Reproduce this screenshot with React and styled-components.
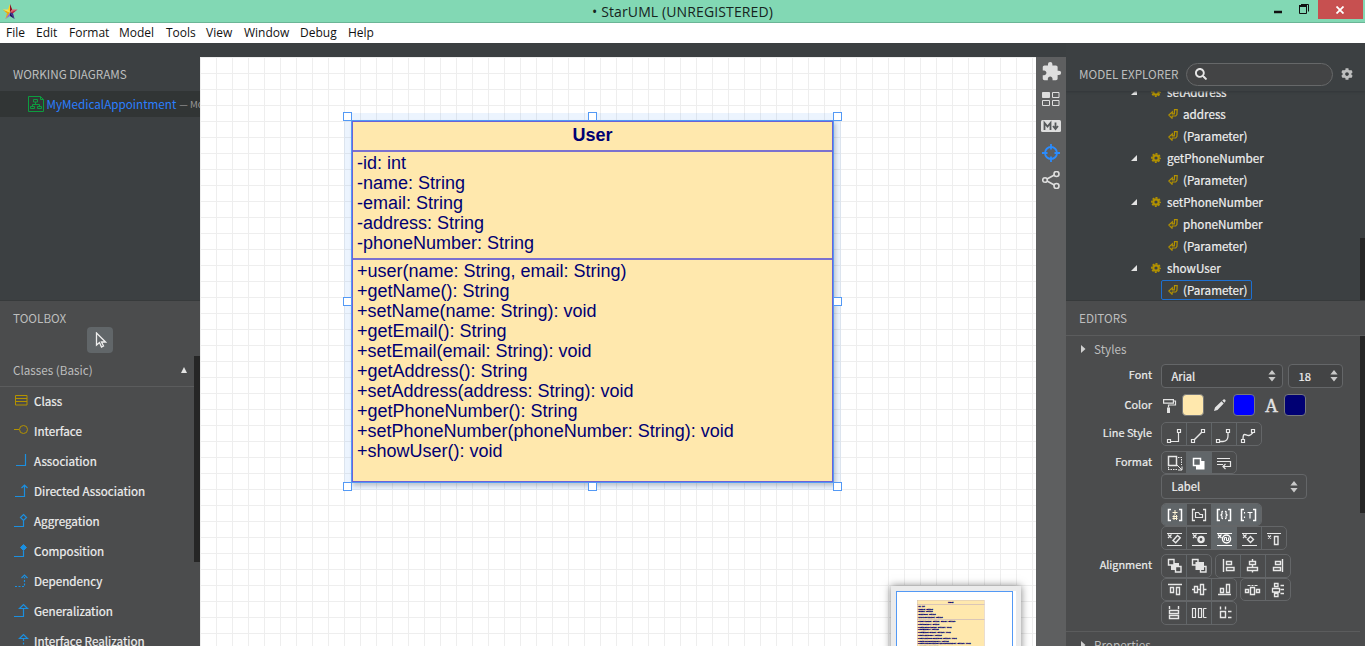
import React from "react";
import styled, { createGlobalStyle } from "styled-components";
import { FaCog, FaSearch } from "react-icons/fa";
import { MdExtension } from "react-icons/md";

const ui = `"Noto Sans CJK SC", "Noto Sans", sans-serif`;

const Global = createGlobalStyle`
  * { box-sizing: border-box; }
  html, body { margin: 0; height: 100%; overflow: hidden; }
  body { background: #3c4042; font-family: ${ui}; }
  svg { display: block; flex: none; }
`;

/* ---------- window frame ---------- */
const Window = styled.div`
  width: 1365px; height: 646px; overflow: hidden;
  display: flex; flex-direction: column; background: #3b3f41;
`;
const TitleBar = styled.header`
  height: 23px; flex: none; background: #82d8b4; border-bottom: 1px solid #6bb596;
  display: flex; justify-content: space-between; align-items: flex-start;
  padding: 0 2px 0 2px;
`;
const TitleSide = styled.div`
  width: 110px; display: flex; justify-content: ${p => (p.$end ? "flex-end" : "flex-start")};
`;
const Title = styled.div`
  font: 14px/22px "Open Sans", sans-serif; color: #16241e; white-space: nowrap;
  letter-spacing: 0.12px; padding-top: 1px;
`;
const CloseButton = styled.div`
  width: 45px; height: 19px; background: #c75050;
  display: flex; align-items: center; justify-content: center;
`;
const MenuBar = styled.nav`
  height: 20px; flex: none; background: #fff; display: flex; padding-left: 6px;
  font: 12px/20px "Open Sans", sans-serif; color: #111;
`;
const MenuItem = styled.span`
  width: ${p => p.$w}px; flex: none; white-space: nowrap;
`;
const Body = styled.main`
  flex: 1; min-height: 0; margin-top: 14px; display: flex;
`;

/* ---------- side panels ---------- */
const Side = styled.aside`
  width: ${p => p.$w}px; flex: none; display: flex; flex-direction: column; overflow: hidden;
  margin-top: -14px; padding-top: 14px; background: #3c4042;
`;
const TopPane = styled.section`
  height: 244px; flex: none; border-bottom: 1px solid #373a3b; overflow: hidden;
  display: flex; flex-direction: column;
`;
const BottomPane = styled.section`
  flex: 1; min-height: 0; background: #4b4c4d; overflow: hidden;
  display: flex; flex-direction: column;
`;
const Heading = styled.h2`
  margin: 0; padding-left: 13px; height: ${p => p.$h}px; line-height: ${p => p.$h}px; flex: none;
  font-size: 11.7px; font-weight: 400; color: #bdbebe; white-space: nowrap;
`;
const DiagramRow = styled.div`
  height: 26px; background: #313535; display: flex; align-items: center;
  padding-left: 28px; white-space: nowrap; font-size: 11.68px; line-height: 26px; color: #2a7fff;
`;
const DiagramName = styled.span`margin: -1px 0 0 2.5px;`;
const DiagramOwner = styled.span`margin-left: 3px; font-size: 9.6px; color: #999;`;

const PointerTool = styled.div`
  width: 26px; height: 26px; margin: -7px 0 0 87px; border-radius: 4px; background: #616669; flex: none;
  display: flex; align-items: center; justify-content: center; padding-left: 1px;
`;
const ToolScroller = styled.div`flex: 1; min-height: 0; margin-top: 3px; display: flex;`;
const ToolList = styled.div`width: 194px; flex: none;`;
const ToolGroup = styled.div`
  height: 31px; border-bottom: 1px solid #5b5c5d; padding: 0 7px 3px 13px;
  display: flex; align-items: center; justify-content: space-between;
  font-size: 11.7px; line-height: 26px; color: #bdbebe;
`;
const ToolRow = styled.div`
  height: 30px; padding-left: 13px; display: flex; align-items: flex-start; gap: 4px;
  font-size: 11.68px; line-height: 28px; color: #efefef; white-space: nowrap;
  -webkit-text-stroke: 0.2px #efefef;
`;
const Thumb = styled.div`
  width: ${p => p.$w}px; height: ${p => p.$h}px; margin-top: ${p => p.$top || 0}px; flex: none; background: #262626;
`;

/* ---------- canvas ---------- */
const Canvas = styled.div`
  width: 836px; flex: none; position: relative; overflow: hidden; background-color: #fff;
  background-image:
    linear-gradient(to right, #eeeeee 1px, transparent 1px),
    linear-gradient(to bottom, #eeeeee 1px, transparent 1px);
  background-size: 16px 16px;
`;
const Node = styled.div`
  position: absolute; left: 152px; top: 64px;
  box-shadow: 0 0 0 8px rgba(70, 150, 245, 0.1), 2px 3px 4px 1px rgba(0, 0, 0, 0.2);
  outline: 1px solid #5399f5;
`;
const Handle = styled.i`
  position: absolute; left: ${p => p.$x}px; top: ${p => p.$y}px; width: 9px; height: 9px;
  background: #fff; border: 1px solid #5399f5;
`;
const ClassBox = styled.div`
  width: 481px; height: 361px; border: 1px solid #6a62d8; background: #ffe8ad; color: #000073;
  font: 18px/20px "Liberation Sans", Arial, sans-serif;
`;
const ClassName = styled.div`height: 28px; line-height: 26px; text-align: center; font-weight: 700;`;
const Compartment = styled.div`
  height: ${p => p.$h}px; border-top: 2px solid #7b71cf; padding: 1px 0 0 4px; white-space: nowrap;
`;
const MiniMap = styled.div`
  position: absolute; left: 691px; top: 529px; width: 130px; height: 120px; padding: 5px;
  background: #ebebeb; box-shadow: 0 0 8px rgba(0, 0, 0, 0.5);
`;
const MiniPage = styled.div`width: 120px; height: 120px; background: #fff;`;
const MiniView = styled.div`
  width: 117px; height: 110px; border: 1px solid #5399f5; padding: 8px 0 0 20px; overflow: hidden;
`;
const MiniScale = styled.div`
  width: 481px; transform: scale(0.1405); transform-origin: 0 0; -webkit-text-stroke: 1.8px #000073;
`;

const Rail = styled.div`
  width: 30px; flex: none; background: #5e5f60; display: flex; flex-direction: column;
  align-items: center; padding-top: 1px;
`;
const RailItem = styled.div`height: 27px; width: 30px; display: flex; align-items: center; justify-content: center; color: #dedede;`;

/* ---------- explorer ---------- */
const ExplorerHead = styled.div`height: 34px; flex: none; display: flex; align-items: center; box-shadow: 0 1px 2px #33373a; position: relative;`;
const ExplorerTitle = styled(Heading)`width: 120px;`;
const SearchBox = styled.div`
  width: 147px; height: 23px; border: 1px solid #666869; border-radius: 12px; background: #434445;
  display: flex; align-items: center; padding-left: 8px; margin-right: 8px; color: #e6e6e6;
`;
const TreeArea = styled.div`flex: 1; min-height: 0; display: flex; overflow: hidden;`;
const Tree = styled.div`width: 294px; flex: none; margin-top: -10px;`;
const TreeRow = styled.div`
  height: 22px; padding-left: ${p => (p.$leaf ? 95 : 65)}px; display: flex; align-items: center;
  font-size: 11.68px; line-height: 18px; color: #efefef; white-space: nowrap;
  -webkit-text-stroke: 0.2px #efefef;
`;
const TreeIcons = styled.span`display: flex; align-items: center; width: 36px; justify-content: space-between; padding-right: 6px;`;
const TreeLabel = styled.span`margin-bottom: 1px;`;
const Leaf = styled.span`
  height: 20px; line-height: 18px; padding: 0 4px 0 6px; border-radius: 2px; display: flex; align-items: center; gap: 5px;
  border: 1px solid ${p => (p.$on ? "#1d70d2" : "transparent")};
`;

/* ---------- editors ---------- */
const EditorArea = styled.div`flex: 1; min-height: 0; display: flex; border-top: 1px solid #5b5c5d;`;
const EditorList = styled.div`width: 294px; flex: none;`;
const Fold = styled.div`
  height: 28px; padding: 0 0 2px 15px; display: flex; align-items: center; gap: 8px;
  font-size: 11.7px; line-height: 18px; color: #bdbebe; ${p => p.$line && "border-top: 1px solid #5b5c5d;"}
`;
const Field = styled.div`display: flex; height: ${p => p.$h}px; gap: 9px;`;
const FieldLabel = styled.span`
  width: 86px; flex: none; text-align: right; font-size: 10.9px; line-height: 21px; color: #ececec;
  -webkit-text-stroke: 0.2px #ececec;
`;
const Controls = styled.div`display: flex; flex-direction: column; align-items: flex-start;`;
const Line = styled.div`display: flex; align-items: center; gap: ${p => p.$gap || 0}px; margin-top: ${p => p.$mt || 0}px; ${p => p.$h && `height: ${p.$h}px;`}`;
const Select = styled.div`
  width: ${p => p.$w}px; height: ${p => p.$h || 24}px; border: 1px solid #646668; border-radius: 4px; background: ${p => p.$bg || "#434445"};
  display: flex; align-items: center; justify-content: space-between; padding: 0 ${p => p.$pr || 6}px 0 9.5px;
  font-size: ${p => p.$fs || 11.2}px; line-height: 18px; color: #efefef;
  -webkit-text-stroke: 0.2px #efefef;
`;
const SelectText = styled.span`margin-bottom: 1px;`;
const Swatch = styled.div`width: 22px; height: 22px; border-radius: 4px; border: 1px solid #77797a; background: ${p => p.$c};`;
const ColorIcon = styled.div`
  width: ${p => p.$w}px; height: 22px; display: flex; align-items: center; justify-content: center; color: #e3e3e3;
  padding: ${p => p.$pt || 0}px ${p => p.$pr || 0}px 0 ${p => p.$pl || 0}px;
  font: 400 18px/22px "Liberation Serif", serif; -webkit-text-stroke: 0.4px #e3e3e3;
`;
const Group = styled.div`
  display: flex; border: 1px solid #646668; border-radius: 5px; height: ${p => p.$h || 24}px; overflow: hidden;
`;
const Button = styled.div`
  width: 24px; height: 100%; background: ${p => (p.$on ? "#616669" : "transparent")};
  & + & { width: 25px; border-left: 1px solid ${p => (p.$on ? "#616669" : "#646668")}; }
  svg { margin: -1px 0 0 -1px; }
`;

const Caret = () => (
  <svg width="8" height="12" fill="#c9c9c9"><path d="M4 0L7.6 4.6H.4ZM4 11.5L7.6 7H.4Z" /></svg>
);
const FoldArrow = () => (
  <svg width="5" height="8" fill="#d0d0d0"><path d="M0 0l4.5 4L0 8z" /></svg>
);

/* Each glyph is drawn on the 25x24 face of its button. */
const superMark = <path d="M6 7.5h15M6 19.5h15M7 8.5l3.5 3.500M10.500 8.500L7 12" strokeWidth="1.200" />;
const glyphs = {
  rect: <><path d="M6.5 17.5h3v3h-3zM16.5 7.5h3v3h-3z" strokeWidth="1.2" /><path d="M10 19.5h7.5V11" strokeWidth="1.2" /></>,
  oblique: <><path d="M5.5 17.5h3v3h-3zM15.5 7.5h3v3h-3z" strokeWidth="1.2" /><path d="M8.5 17.5L15.5 10.5" strokeWidth="1.5" /></>,
  round: <><path d="M5.5 17.5h3v3h-3zM15.5 7.5h3v3h-3z" strokeWidth="1.2" /><path d="M9 19.5h3Q17 19 17 14V11" strokeWidth="1.3" /></>,
  curve: <><path d="M5.5 17.5h3v3h-3zM15.5 7.5h3v3h-3z" strokeWidth="1.2" /><path d="M7 17C7 9 10 14 13 13.5S16 11 17 10.5" strokeWidth="1.4" /></>,
  autosize: <><path d="M7.5 5.5h8v9h-8z" strokeWidth="1.5" /><path d="M17 6.5h4M20.5 8v6M7 18.5h9M7.5 16v2" strokeDasharray="1.5 1" /><path d="M16 14l5 5M21 15.5V19h-4" /></>,
  shadow: <><path d="M10 10h8.5v8.5h-8.5z" fill="#fff" stroke="none" /><path d="M7.5 7.5h7v7h-7z" fill="#616669" stroke="#fff" strokeWidth="1.5" /></>,
  wrap: <path d="M6 7.5h13M6 10.5h13.5v5H12M6 13.5h6M14.5 13l-2.5 2.5 2.5 2.5" strokeWidth="1.2" />,
  brVis: <><path d="M10 6.5H7.5v11H10M18 6.5h2.5v11H18" strokeWidth="1.5" /><path d="M14 7v5M11.5 9.5h5M11.5 13.5h5M11.5 15.5h5M13 12v5M15.5 12v5" stroke="#fff7d8" /></>,
  brFolder: <><path d="M9 6.5H6.5v11H9M17 6.5h2.5v11H17" strokeWidth="1.3" /><path d="M9.5 14.5v-5h3l1.5 2h2.5v3z" strokeWidth="1.2" /></>,
  brBraces: <><path d="M9 6.5H6.5v11H9M17 6.5h2.5v11H17" strokeWidth="1.5" /><path d="M12 8.5q-1.5-.5-1 1.7q0 1.3-1 1.8q1 .5 1 1.8q-.5 2 1 1.7M14 8.5q1.5-.5 1 1.7q0 1.3 1 1.8q-1 .5-1 1.8q.5 2-1 1.7" strokeWidth="1.2" /></>,
  brType: <><path d="M8 6.5H5.5v11H8M17 6.5h2.5v11H17" strokeWidth="1.5" /><path d="M11.5 9.5h5M14 9.5v6M8.5 9v1.5M8.5 13.5v1.5" strokeWidth="1.2" /></>,
  supAttr: <>{superMark}<path d="M12 14.5l4.5-5 2.7 2.3-4.500 5z" strokeWidth="1.400" /></>,
  supOper: <>{superMark}<circle cx="15" cy="13.5" r="2.6" strokeWidth="2.4" /></>,
  supRecep: <>{superMark}<circle cx="15.500" cy="13" r="4" stroke="#fff" strokeWidth="1.500" /><path d="M13.500 14.500v-3h2v3h2v-3" stroke="#fff" /></>,
  supLit: <>{superMark}<path d="M14.5 10.5l3 3-3 3-3-3z" strokeWidth="1.400" /></>,
  supRect: <><path d="M6 7.5h14M7 9.5l3 3M10 9.5l-3 3" strokeWidth="1.200" /><path d="M13.500 10.500h3.500v8h-3.500z" strokeWidth="1.400" /></>,
  front: <><path d="M10 9h8v7h-8z" fill="#e3e3e3" stroke="none" /><path d="M7.500 5.500h5.500v5.500h-5.500zM14.500 12.500h5.500v5.500h-5.500z" fill="#4b4c4d" strokeWidth="1.400" /></>,
  back: <><path d="M6.500 5.500h5.500v5.500h-5.500zM14.500 12.500h5.500v5.500h-5.500z" strokeWidth="1.400" /><path d="M9.500 8h8.500v8h-8.500z" fill="#e3e3e3" stroke="none" /></>,
  aLeft: <path d="M8.500 5v13M11.500 7.500h5v3h-5zM11.500 13.500h7.500v3h-7.500z" strokeWidth="1.400" />,
  aCenter: <path d="M12.500 5v2.500M12.500 10.500v3M12.500 16.500v2M9.500 7.500h6v3h-6zM7.500 13.500h10v3h-10z" strokeWidth="1.400" />,
  aRight: <path d="M17.500 5v13M10.500 7.500h5v3h-5zM8.500 13.500h7v3h-7z" strokeWidth="1.400" />,
  aTop: <path d="M7 6.500h14M9.500 9.500h3v5h-3zM15.500 9.500h3v7h-3z" strokeWidth="1.400" />,
  aMiddle: <path d="M6 11.500h2M12 11.500h2.500M17.500 11.500h3M8.500 8.500h3v6h-3zM14.500 6.500h3v10h-3z" strokeWidth="1.400" />,
  aBottom: <path d="M7 16.500h13M9.500 10.500h3v4h-3zM15.500 6.500h3v8h-3z" strokeWidth="1.400" />,
  spaceH: <><path d="M5.500 11.500h3v3h-3zM10.500 9.500h4v7h-4zM16.500 11.500h3v3h-3z" strokeWidth="1.400" /><path d="M7.500 7.500h3M11.500 7.500h2M14.500 7.500h3" /></>,
  spaceV: <path d="M9.500 5.500h3.500v3h-3.500zM7.500 10.500h7v3.500h-7zM9.500 15.500h3.500v3h-3.500zM15.500 7.500h3.500M15.500 11.500h3.500M15.500 15.500h3.500" strokeWidth="1.300" />,
  sameW: <path d="M8.500 9.500h9v3h-9zM8.500 14.500h9v3h-9zM8.500 5v3M17.500 5v3" strokeWidth="1.400" />,
  sameH: <path d="M6.500 7.500h3v9h-3zM12.500 7.500h3v9h-3zM20.500 7.500h-3M20.500 16.500h-3M17.500 7.500v9" strokeWidth="1.200" />,
  sameS: <path d="M9.500 10.500h5v6h-5zM9.500 5.500v3M14.500 5.500v3M17 10.500h3.500M17 16.500h3.500" strokeWidth="1.400" />,
};

function Tools({ names, on = [], h }) {
  return (
    <Group $h={h}>
      {names.map(n => (
        <Button key={n} $on={on.includes(n)}>
          <svg width="24" height="24" fill="none" stroke={on.includes(n) ? "#fff" : "#e8e8e8"} strokeWidth="1">{glyphs[n]}</svg>
        </Button>
      ))}
    </Group>
  );
}

/* ---------- toolbox data ---------- */
const B = "#1b8fe0", Y = "#b39200";
const tools = [
  ["Class", Y, <path d="M2.5 8.5h11.5v9.5h-11.5zM2.5 11.5h11.5M2.5 14.5h11.5" />],
  ["Interface", Y, <><path d="M1 12.5h5" /><circle cx="10.5" cy="12.5" r="4" /></>],
  ["Association", B, <path d="M3 18.5h9.5V7" strokeWidth="1.2" />],
  ["Directed Association", B, <path d="M2 19.5h9.5V8M8.5 11l3-3 3 3" strokeWidth="1.2" />],
  ["Aggregation", B, <path d="M1 19.5h9.5v-6M10.5 7.5l3 3-3 3-3-3z" strokeWidth="1.2" />],
  ["Composition", B, <><path d="M1 19.5h9.5v-6" strokeWidth="1.2" /><path d="M10.5 7.5l3 3-3 3-3-3z" fill={B} /></>],
  ["Dependency", B, <><path d="M2 19.5h9.5V10" strokeDasharray="2 1.5" strokeWidth="1.2" /><path d="M8.5 11l3-3 3 3" strokeWidth="1.2" /></>],
  ["Generalization", B, <path d="M1 19.5h9.5v-8M6.5 11.5l4-4 4 4z" strokeWidth="1.2" />],
  ["Interface Realization", B, <><path d="M10.5 12v8" strokeDasharray="2 1.5" strokeWidth="1.2" /><path d="M6.5 11.5l4-4 4 4z" strokeWidth="1.2" /></>],
];

const tree = [
  [0, "setAddress"], [1, "address"], [1, "(Parameter)"],
  [0, "getPhoneNumber"], [1, "(Parameter)"],
  [0, "setPhoneNumber"], [1, "phoneNumber"], [1, "(Parameter)"],
  [0, "showUser"], [1, "(Parameter)", true],
];

const menus = [["File", 30], ["Edit", 33], ["Format", 50], ["Model", 47], ["Tools", 40], ["View", 38], ["Window", 56], ["Debug", 48], ["Help", 40]];

const handles = [[-9, -9], [236, -9], [481, -9], [-9, 176], [481, 176], [-9, 361], [236, 361], [481, 361]];

const attributes = ["-id: int", "-name: String", "-email: String", "-address: String", "-phoneNumber: String"];
const operations = [
  "+user(name: String, email: String)", "+getName(): String", "+setName(name: String): void",
  "+getEmail(): String", "+setEmail(email: String): void", "+getAddress(): String",
  "+setAddress(address: String): void", "+getPhoneNumber(): String",
  "+setPhoneNumber(phoneNumber: String): void", "+showUser(): void",
];

const UserClass = () => (
  <ClassBox>
    <ClassName>User</ClassName>
    <Compartment $h={108}>{attributes.map(a => <div key={a}>{a}</div>)}</Compartment>
    <Compartment $h={221}>{operations.map(o => <div key={o}>{o}</div>)}</Compartment>
  </ClassBox>
);

const LogoSvg = styled.svg`margin-top: 3px;`;
const Logo = () => (
  <LogoSvg width="16" height="17" viewBox="0 0 16 17">
    <path d="M8 1L6 6.5 8 9.5Z" fill="#ffd21e" /><path d="M8 1l2.2 5.5L8 9.5Z" fill="#8c1020" />
    <path d="M15.5 6.5l-5.3 0L8 9.5Z" fill="#ee5a70" /><path d="M15.5 6.5L11 10.3 8 9.5Z" fill="#c0203c" />
    <path d="M12.6 16L11 10.3 8 9.5Z" fill="#4a2390" /><path d="M12.6 16L8 13 8 9.5Z" fill="#211060" />
    <path d="M3.4 16L8 13 8 9.5Z" fill="#8f63d6" /><path d="M3.4 16L5 10.3 8 9.5Z" fill="#e8a020" />
    <path d="M.5 6.5L5 10.3 8 9.5Z" fill="#f5a800" /><path d="M.5 6.5L6 6.5 8 9.5Z" fill="#ffe04a" />
  </LogoSvg>
);

const Gear = () => (
  <svg width="10" height="10" viewBox="0 0 10 10" fill="none" stroke={Y}>
    <circle cx="5" cy="5" r="2.7" strokeWidth="2.2" />
    <circle cx="5" cy="5" r="4.2" strokeWidth="1.5" strokeDasharray="2 1.298" strokeDashoffset="1" />
  </svg>
);
const Return = () => (
  <svg width="10" height="10" viewBox="0 0 10 10" fill="none" stroke={Y} strokeWidth="1.2">
    <path d="M6.5.7H9.2L8.9 5.5 7.7 7H4.3L4 9.2.8 6 4.3 2.8V4.8H6.3Z" />
  </svg>
);

export default function App() {
  return (
    <Window>
      <Global />
      <TitleBar>
        <TitleSide><Logo /></TitleSide>
        <Title>• StarUML (UNREGISTERED)</Title>
        <TitleSide $end>
          <svg width="45" height="19" fill="none" stroke="#111">
            <path d="M1 12h8" strokeWidth="2.5" />
            <path d="M26.5 6.5h7v7h-7z" /><path d="M26 6h8" strokeWidth="2" /><path d="M28 4.5h7.5v7" />
          </svg>
          <CloseButton>
            <svg width="8" height="8" stroke="#fff" strokeWidth="1.8"><path d="M.5.5l7 7M7.5.5l-7 7" /></svg>
          </CloseButton>
        </TitleSide>
      </TitleBar>
      <MenuBar>{menus.map(([m, w]) => <MenuItem key={m} $w={w}>{m}</MenuItem>)}</MenuBar>
      <Body>
        <Side $w={200}>
          <TopPane>
            <Heading $h={34}>WORKING DIAGRAMS</Heading>
            <DiagramRow>
              <svg width="16" height="16" fill="none" stroke="#0d9c3f">
                <path d="M.5.5h12l3 3v12H.5zM12.5.5v3h3M5.5 3.5h4v2.5h-4zM2.5 10.5h4v2h-4zM9.5 10.5h4v2h-4zM7.5 6v2.5M4.5 10.5v-2h7v2" />
              </svg>
              <DiagramName>MyMedicalAppointment</DiagramName>
              <DiagramOwner>— Model</DiagramOwner>
            </DiagramRow>
          </TopPane>
          <BottomPane>
            <Heading $h={33}>TOOLBOX</Heading>
            <PointerTool>
              <svg width="12" height="16" fill="none" stroke="#eee" strokeWidth="1.3"><path d="M1.5 1v12l3-2.5 2 4.5 2-1-2-4h4z" /></svg>
            </PointerTool>
            <ToolScroller>
              <ToolList>
                <ToolGroup>Classes (Basic)<svg width="6" height="6" fill="#e3e3e3"><path d="M3 0l3 6H0z" /></svg></ToolGroup>
                {tools.map(([name, color, art]) => (
                  <ToolRow key={name}>
                    <svg width="17" height="30" fill="none" stroke={color}>{art}</svg>
                    {name}
                  </ToolRow>
                ))}
              </ToolList>
              <Thumb $w={6} $h={206} />
            </ToolScroller>
          </BottomPane>
        </Side>

        <Canvas>
          <Node>
            <UserClass />
            {handles.map(([x, y]) => <Handle key={`${x},${y}`} $x={x} $y={y} />)}
          </Node>
          <MiniMap>
            <MiniPage><MiniView><MiniScale><UserClass /></MiniScale></MiniView></MiniPage>
          </MiniMap>
        </Canvas>

        <Rail>
          <RailItem><MdExtension size={21} /></RailItem>
          <RailItem>
            <svg width="18" height="14" fill="none" stroke="#dedede">
              <path d="M.5.5h7v5h-7z" fill="#dedede" /><path d="M10.5.5h6.5v5h-6.5zM.5 8.5h7v5h-7zM10.5 8.5h6.5v5h-6.5z" />
            </svg>
          </RailItem>
          <RailItem>
            <svg width="20" height="12"><rect width="20" height="12" rx="1.5" fill="#dedede" />
              <path d="M3.5 10V3l3 3.5 3-3.5v7M14.5 2.5v5M12 6l2.5 3L17 6" fill="none" stroke="#55585a" strokeWidth="1.8" /></svg>
          </RailItem>
          <RailItem>
            <svg width="18" height="18" fill="none" stroke="#2a8cff" strokeWidth="1.8">
              <circle cx="9" cy="9" r="6" /><path d="M9 0v5.5M9 12.5V18M0 9h5.5M12.5 9H18" />
            </svg>
          </RailItem>
          <RailItem>
            <svg width="18" height="18" fill="none" stroke="#dedede" strokeWidth="1.6">
              <circle cx="3" cy="9" r="2.3" /><circle cx="14.5" cy="3" r="2.5" /><circle cx="14.5" cy="15" r="2.5" />
              <path d="M5 8l7.3-4M5 10l7.3 4" />
            </svg>
          </RailItem>
        </Rail>

        <Side $w={299}>
          <TopPane>
            <ExplorerHead>
              <ExplorerTitle $h={34}>MODEL EXPLORER</ExplorerTitle>
              <SearchBox><FaSearch size={12} /></SearchBox>
              <FaCog size={12} color="#bdbebe" />
            </ExplorerHead>
            <TreeArea>
              <Tree>
                {tree.map(([leaf, name, on], i) => (
                  <TreeRow key={i} $leaf={leaf}>
                    {leaf
                      ? <Leaf $on={on}><Return /><TreeLabel>{name}</TreeLabel></Leaf>
                      : <><TreeIcons><svg width="6" height="6" fill="#e3e3e3"><path d="M6 0v6H0z" /></svg><Gear /></TreeIcons><TreeLabel>{name}</TreeLabel></>}
                  </TreeRow>
                ))}
              </Tree>
              <Thumb $w={5} $h={62} $top={147} />
            </TreeArea>
          </TopPane>
          <BottomPane>
            <Heading $h={34}>EDITORS</Heading>
            <EditorArea>
              <EditorList>
                <Fold><FoldArrow />Styles</Fold>
                <Field $h={30}><FieldLabel>Font</FieldLabel>
                  <Line $gap={5} $h={24}>
                    <Select $w={122}><SelectText>Arial</SelectText><Caret /></Select>
                    <Select $w={55} $pr={4}><SelectText>18</SelectText><Caret /></Select>
                  </Line>
                </Field>
                <Field $h={28}><FieldLabel>Color</FieldLabel>
                  <Line $h={22}>
                    <ColorIcon $w={21} $pr={4}>
                      <svg width="15" height="15" fill="none" stroke="#e3e3e3" strokeWidth="1.2">
                        <path d="M1.6 1.6h9.8v3.5H1.6zM11.5 3h2v4H6.5v2.5" /><path d="M5 9.5h3V15H5z" fill="#e3e3e3" stroke="none" />
                      </svg>
                    </ColorIcon>
                    <Swatch $c="#ffe8ad" />
                    <ColorIcon $w={29} $pl={2}>
                      <svg width="12" height="12" fill="#e3e3e3"><path d="M0 12l1-3.5L7.5 2.3l2.2 2.2L3.5 11zM8.3 1.5L9.5.4q1-.4 1.7.4.7.8.3 1.5L10.4 3.7z" /></svg>
                    </ColorIcon>
                    <Swatch $c="#0000ff" />
                    <ColorIcon $w={29} $pl={4} $pt={2}>A</ColorIcon>
                    <Swatch $c="#000073" />
                  </Line>
                </Field>
                <Field $h={29}><FieldLabel>Line Style</FieldLabel><Controls><Tools names={["rect", "oblique", "round", "curve"]} /></Controls></Field>
                <Field $h={103}><FieldLabel>Format</FieldLabel>
                  <Controls>
                    <Tools names={["autosize", "shadow", "wrap"]} on={["shadow"]} h={23} />
                    <Select $w={146} $h={25} $pr={8} $bg="transparent"><SelectText>Label</SelectText><Caret /></Select>
                    <Line $mt={4}><Tools names={["brVis", "brFolder", "brBraces", "brType"]} on={["brVis", "brBraces", "brType"]} h={23} /></Line>
                    <Tools names={["supAttr", "supOper", "supRecep", "supLit", "supRect"]} on={["supRecep"]} />
                  </Controls>
                </Field>
                <Field $h={77}><FieldLabel>Alignment</FieldLabel>
                  <Controls>
                    <Line $gap={3}><Tools names={["front", "back"]} /><Tools names={["aLeft", "aCenter", "aRight"]} /></Line>
                    <Line $gap={3}><Tools names={["aTop", "aMiddle", "aBottom"]} h={23} /><Tools names={["spaceH", "spaceV"]} h={23} /></Line>
                    <Tools names={["sameW", "sameH", "sameS"]} />
                  </Controls>
                </Field>
                <Fold $line><FoldArrow />Properties</Fold>
              </EditorList>
              <Thumb $w={5} $h={177} />
            </EditorArea>
          </BottomPane>
        </Side>
      </Body>
    </Window>
  );
}
